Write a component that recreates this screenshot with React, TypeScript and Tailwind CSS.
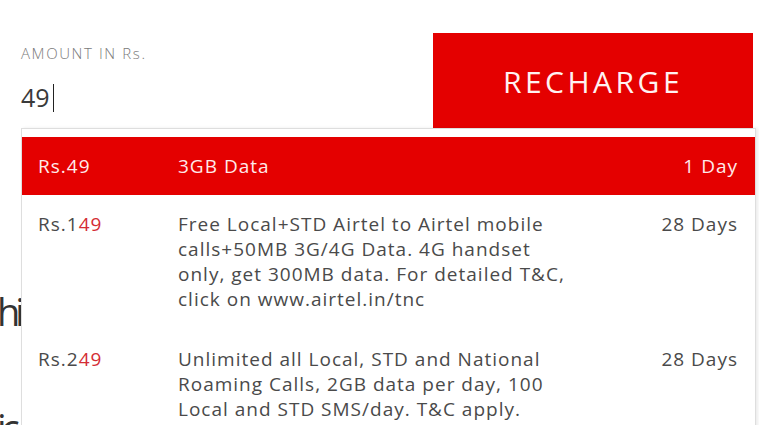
const plans = [
  {
    pre: "Rs.1",
    hit: "49",
    desc: "Free Local+STD Airtel to Airtel mobile calls+50MB 3G/4G Data. 4G handset only, get 300MB data. For detailed T&C, click on www.airtel.in/tnc",
    days: "28 Days",
  },
  {
    pre: "Rs.2",
    hit: "49",
    desc: "Unlimited all Local, STD and National Roaming Calls, 2GB data per day, 100 Local and STD SMS/day. T&C apply.",
    days: "28 Days",
  },
];

const App = () => {
  return (
    <div className="relative w-[759px] h-[425px] overflow-hidden bg-white font-['Open_Sans',sans-serif] text-[#4a4a4a]">
      <div className="flex pt-[33px]">
        <div className="w-[433px] pl-[21px] pt-[12px]">
          <div className="text-[15px] font-light tracking-[1.6px] text-[#7a7a7a] leading-[16px]">AMOUNT IN Rs.</div>
          <div className="mt-[22px] flex items-center h-[30px] text-[25px] text-[#3a3a3a]">
            <span>49</span>
            <span className="ml-[3px] w-[1.5px] h-[28px] bg-[#222]" />
          </div>
        </div>
        <button className="w-[320px] h-[96px] bg-[#e40000] text-[#fff2f2] text-[30px] tracking-[3.5px] flex items-center justify-center">
          RECHARGE
        </button>
      </div>

      <div className="mt-[158px] text-[38px] leading-[48px] tracking-[-5px] text-[#333] -ml-[3px]">
        <div>hi</div>
        <div className="mt-[68px]">ic</div>
      </div>

      <div className="absolute left-[21px] top-[128px] w-[735px] h-[320px] bg-white border border-[#dedede] shadow-[2px_0_3px_rgba(0,0,0,0.08)] pt-[8px]">
        <div className="flex items-center h-[58px] bg-[#e40000] text-[#ffeaea] text-[19px] tracking-[1px] pl-[16px] pr-[17px]">
          <span className="w-[140px]">Rs.49</span>
          <span className="flex-1">3GB Data</span>
          <span>1 Day</span>
        </div>
        {plans.map((p) => (
          <div key={p.pre} className="flex text-[19px] tracking-[1px] leading-[25px] pl-[16px] pr-[17px] pt-[17px] pb-[18px]">
            <span className="w-[140px]">
              {p.pre}
              <span className="text-[#d42d35]">{p.hit}</span>
            </span>
            <span className="w-[401px]">{p.desc}</span>
            <span className="flex-1 text-right">{p.days}</span>
          </div>
        ))}
      </div>
    </div>
  );
};

export default App;
